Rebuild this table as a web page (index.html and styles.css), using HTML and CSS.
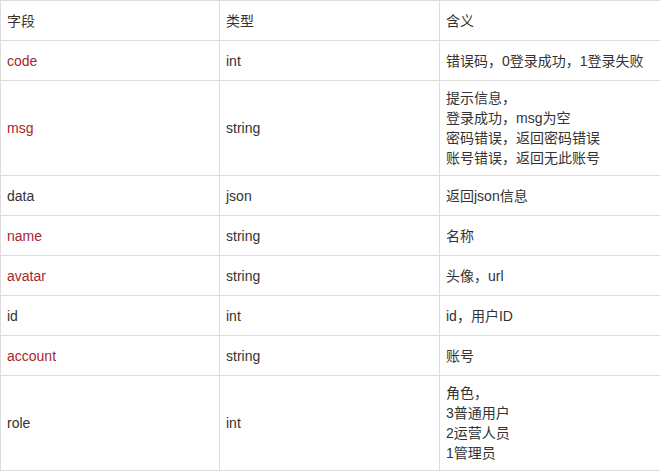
FILE: index.html
```html
<!DOCTYPE html>
<html lang="zh">
<head>
<meta charset="utf-8">
<link rel="stylesheet" href="styles.css">
</head>
<body>
<table class="doc-table">
  <colgroup><col class="c1"><col class="c2"><col class="c3"></colgroup>
  <tr><td>字段</td><td>类型</td><td>含义</td></tr>
  <tr><td class="key">code</td><td>int</td><td>错误码，0登录成功，1登录失败</td></tr>
  <tr><td class="key">msg</td><td>string</td><td>提示信息，<br>登录成功，msg为空<br>密码错误，返回密码错误<br>账号错误，返回无此账号</td></tr>
  <tr><td>data</td><td>json</td><td>返回json信息</td></tr>
  <tr><td class="key">name</td><td>string</td><td>名称</td></tr>
  <tr><td class="key">avatar</td><td>string</td><td>头像，url</td></tr>
  <tr><td>id</td><td>int</td><td>id，用户ID</td></tr>
  <tr><td class="key">account</td><td>string</td><td>账号</td></tr>
  <tr><td>role</td><td>int</td><td>角色，<br>3普通用户<br>2运营人员<br>1管理员</td></tr>
</table>
</body>
</html>
```
FILE: styles.css
```css
html, body {
  margin: 0;
  padding: 0;
  background: #ffffff;
}
.doc-table {
  border-collapse: collapse;
  table-layout: fixed;
  width: 660px;
  font-family: "Liberation Sans", "Noto Sans CJK SC", sans-serif;
  font-size: 14px;
  line-height: 20px;
  color: #333333;
}
.c1 { width: 219px; }
.c2 { width: 220px; }
.c3 { width: 221px; }
.doc-table tr { height: 40px; }
.doc-table td {
  border: 1px solid #dddddd;
  padding: 7px 6px;
  vertical-align: middle;
  text-align: left;
}
.doc-table td.key {
  color: #a8262d;
}
```
